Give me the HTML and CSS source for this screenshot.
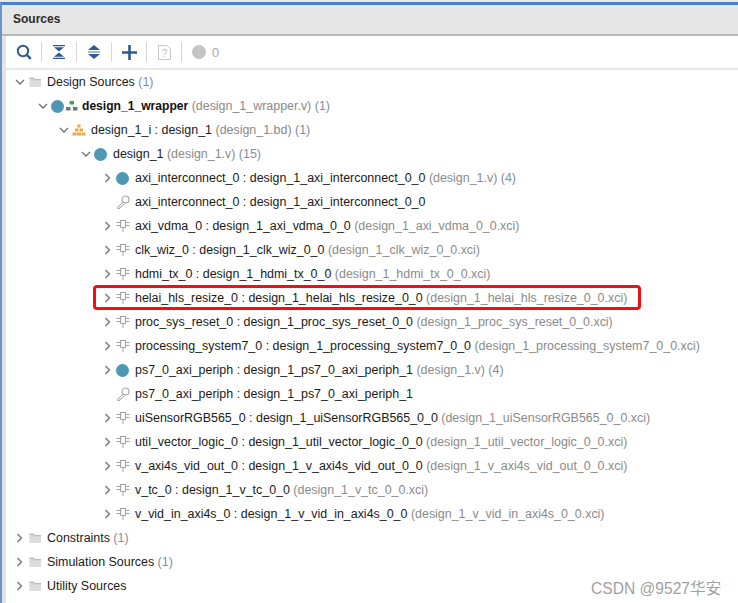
FILE: index.html
```html
<!DOCTYPE html>
<html lang="en">
<head>
  <meta charset="UTF-8" />
  <title>Sources</title>
  <link rel="stylesheet" href="styles.css">
</head>
<body>
  <svg class="defs" width="0" height="0">
    <symbol id="i-down" viewBox="0 0 10 10"><path d="M1 3l4 4 4-4" fill="none" stroke="#707070" stroke-width="1.3"/></symbol>
    <symbol id="i-right" viewBox="0 0 10 10"><path d="M2.500 1l4 4-4 4" fill="none" stroke="#707070" stroke-width="1.3"/></symbol>
    <symbol id="i-folder" viewBox="0 0 14 12"><path d="M1.500 3h4l1 1.500h6.500V11H1.500z" fill="#dcdcdc"/><path d="M1.500 1.500h4.500l1 1.500h6v1.500H6.500L5.500 3h-4z" fill="#bcbcbc"/></symbol>
    <symbol id="i-chip" viewBox="0 0 14 14"><path d="M4 1.500h6M4.500 1.500v7h5v-7M7 8.500V13M.5 3.500h4M.5 6.500h4M9.500 3.500h4M9.500 6.500h4" fill="none" stroke="#a0a0a0"/></symbol>
    <symbol id="i-key" viewBox="0 0 14 14"><circle cx="9.500" cy="4.500" r="3.500" fill="none" stroke="#a2a2a2" stroke-width="1.100"/><path d="M7 7L1.500 12.500v1h2L4 12h1.500l.5-1.500 1.500-.5L8 8.500" fill="none" stroke="#a2a2a2"/></symbol>
    <symbol id="i-tree" viewBox="0 0 12 10"><rect x="3.500" y="0" width="4.500" height="3.500" fill="#2fb14c"/><rect x="0" y="6" width="4.500" height="3.500" fill="#6b7780"/><rect x="7" y="6" width="4.500" height="3.500" fill="#6b7780"/></symbol>
    <symbol id="i-bd" viewBox="0 0 14 12"><rect x="5.500" y="0.500" width="3" height="3" fill="#f2a93b"/><rect x="3" y="4.500" width="3.500" height="3" fill="#f2a93b"/><rect x="7.500" y="4.500" width="3.500" height="3" fill="#f2a93b"/><rect x="0.500" y="8.500" width="4" height="3" fill="#f2a93b"/><rect x="5" y="8.500" width="4" height="3" fill="#f2a93b"/><rect x="9.500" y="8.500" width="4" height="3" fill="#f2a93b"/></symbol>
  </svg>

  <div class="window">
    <div class="title">Sources</div>

    <div class="pane">
      <div class="toolbar">
        <span class="tool">
          <svg width="16" height="16" viewBox="0 0 16 16"><circle cx="7" cy="7" r="5.200" fill="none" stroke="#2f5a8f" stroke-width="2"/><path d="M10.800 10.800L14.800 14.800" stroke="#2f5a8f" stroke-width="2.400"/></svg>
        </span>
        <span class="sep"></span>
        <span class="tool">
          <svg width="12" height="14" viewBox="0 0 12 14"><path d="M0 0h12v1.300H0zM0 12.700h12V14H0zM1 2.200h10L6 6.400zM1 11.800h10L6 7.600z" fill="#2f5a8f"/></svg>
        </span>
        <span class="sep"></span>
        <span class="tool">
          <svg width="12" height="14" viewBox="0 0 12 14"><path d="M0 5L6 0l6 5zM0 9l6 5 6-5z" fill="#2f5a8f"/><path d="M0 6.200h12v1.600H0z" fill="#8fa6c4"/></svg>
        </span>
        <span class="sep"></span>
        <span class="tool">
          <svg width="15" height="15" viewBox="0 0 15 15"><path d="M6.200 0h2.600v6.200H15v2.600H8.800V15H6.200V8.800H0V6.200h6.200z" fill="#2f5a8f"/></svg>
        </span>
        <span class="sep"></span>
        <span class="tool">
          <svg width="13" height="15" viewBox="0 0 13 15"><path d="M.5.500h8.500l3.500 3.500v10.500H.5z" fill="none" stroke="#c8c8c8"/><text x="6.500" y="11.500" class="help">?</text></svg>
        </span>
        <span class="sep"></span>
        <span class="status"><span class="status-dot">!</span>0</span>
      </div>

      <ul class="tree">
        <li class="row d0"><svg class="arrow"><use href="#i-down"/></svg><svg class="icon"><use href="#i-folder"/></svg><span>Design Sources</span><span class="count">&nbsp;(1)</span></li>
        <li class="row d1"><svg class="arrow"><use href="#i-down"/></svg><span class="dot tight"></span><svg class="icon-tree"><use href="#i-tree"/></svg><span class="bold">design_1_wrapper</span><span class="meta">&nbsp;(design_1_wrapper.v)</span><span class="count">&nbsp;(1)</span></li>
        <li class="row d2"><svg class="arrow"><use href="#i-down"/></svg><svg class="icon"><use href="#i-bd"/></svg><span>design_1_i : design_1</span><span class="meta">&nbsp;(design_1.bd)</span><span class="count">&nbsp;(1)</span></li>
        <li class="row d3"><svg class="arrow"><use href="#i-down"/></svg><span class="dot"></span><span>design_1</span><span class="meta">&nbsp;(design_1.v)</span><span class="count">&nbsp;(15)</span></li>
        <li class="row d4"><svg class="arrow"><use href="#i-right"/></svg><span class="dot"></span><span>axi_interconnect_0 : design_1_axi_interconnect_0_0</span><span class="meta">&nbsp;(design_1.v)</span><span class="count">&nbsp;(4)</span></li>
        <li class="row d4"><span class="no-arrow"></span><svg class="icon"><use href="#i-key"/></svg><span>axi_interconnect_0 : design_1_axi_interconnect_0_0</span></li>
        <li class="row d4"><svg class="arrow"><use href="#i-right"/></svg><svg class="icon"><use href="#i-chip"/></svg><span>axi_vdma_0 : design_1_axi_vdma_0_0</span><span class="meta">&nbsp;(design_1_axi_vdma_0_0.xci)</span></li>
        <li class="row d4"><svg class="arrow"><use href="#i-right"/></svg><svg class="icon"><use href="#i-chip"/></svg><span>clk_wiz_0 : design_1_clk_wiz_0_0</span><span class="meta">&nbsp;(design_1_clk_wiz_0_0.xci)</span></li>
        <li class="row d4"><svg class="arrow"><use href="#i-right"/></svg><svg class="icon"><use href="#i-chip"/></svg><span>hdmi_tx_0 : design_1_hdmi_tx_0_0</span><span class="meta">&nbsp;(design_1_hdmi_tx_0_0.xci)</span></li>
        <li class="row d4 marked"><svg class="arrow"><use href="#i-right"/></svg><svg class="icon"><use href="#i-chip"/></svg><span>helai_hls_resize_0 : design_1_helai_hls_resize_0_0</span><span class="meta">&nbsp;(design_1_helai_hls_resize_0_0.xci)</span></li>
        <li class="row d4"><svg class="arrow"><use href="#i-right"/></svg><svg class="icon"><use href="#i-chip"/></svg><span>proc_sys_reset_0 : design_1_proc_sys_reset_0_0</span><span class="meta">&nbsp;(design_1_proc_sys_reset_0_0.xci)</span></li>
        <li class="row d4"><svg class="arrow"><use href="#i-right"/></svg><svg class="icon"><use href="#i-chip"/></svg><span>processing_system7_0 : design_1_processing_system7_0_0</span><span class="meta">&nbsp;(design_1_processing_system7_0_0.xci)</span></li>
        <li class="row d4"><svg class="arrow"><use href="#i-right"/></svg><span class="dot"></span><span>ps7_0_axi_periph : design_1_ps7_0_axi_periph_1</span><span class="meta">&nbsp;(design_1.v)</span><span class="count">&nbsp;(4)</span></li>
        <li class="row d4"><span class="no-arrow"></span><svg class="icon"><use href="#i-key"/></svg><span>ps7_0_axi_periph : design_1_ps7_0_axi_periph_1</span></li>
        <li class="row d4"><svg class="arrow"><use href="#i-right"/></svg><svg class="icon"><use href="#i-chip"/></svg><span>uiSensorRGB565_0 : design_1_uiSensorRGB565_0_0</span><span class="meta">&nbsp;(design_1_uiSensorRGB565_0_0.xci)</span></li>
        <li class="row d4"><svg class="arrow"><use href="#i-right"/></svg><svg class="icon"><use href="#i-chip"/></svg><span>util_vector_logic_0 : design_1_util_vector_logic_0_0</span><span class="meta">&nbsp;(design_1_util_vector_logic_0_0.xci)</span></li>
        <li class="row d4"><svg class="arrow"><use href="#i-right"/></svg><svg class="icon"><use href="#i-chip"/></svg><span>v_axi4s_vid_out_0 : design_1_v_axi4s_vid_out_0_0</span><span class="meta">&nbsp;(design_1_v_axi4s_vid_out_0_0.xci)</span></li>
        <li class="row d4"><svg class="arrow"><use href="#i-right"/></svg><svg class="icon"><use href="#i-chip"/></svg><span>v_tc_0 : design_1_v_tc_0_0</span><span class="meta">&nbsp;(design_1_v_tc_0_0.xci)</span></li>
        <li class="row d4"><svg class="arrow"><use href="#i-right"/></svg><svg class="icon"><use href="#i-chip"/></svg><span>v_vid_in_axi4s_0 : design_1_v_vid_in_axi4s_0_0</span><span class="meta">&nbsp;(design_1_v_vid_in_axi4s_0_0.xci)</span></li>
        <li class="row d0"><svg class="arrow"><use href="#i-right"/></svg><svg class="icon"><use href="#i-folder"/></svg><span>Constraints</span><span class="count">&nbsp;(1)</span></li>
        <li class="row d0"><svg class="arrow"><use href="#i-right"/></svg><svg class="icon"><use href="#i-folder"/></svg><span>Simulation Sources</span><span class="count">&nbsp;(1)</span></li>
        <li class="row d0"><svg class="arrow"><use href="#i-right"/></svg><svg class="icon"><use href="#i-folder"/></svg><span>Utility Sources</span></li>
      </ul>
    </div>
  </div>

  <div class="mark">CSDN @9527华安</div>
</body>
</html>
```
FILE: styles.css
```css
html, body {
  margin: 0;
  height: 100%;
}
body {
  font-family: "Liberation Sans", Arial, sans-serif;
  font-size: 12.45px;
  background-color: #ffffff;
  color: #1a1a1a;
  overflow: hidden;
  position: relative;
}
.defs {
  position: absolute;
}

.window {
  box-sizing: border-box;
  height: 603px;
  border-top: 3px solid #4a7fd0;
  border-left: 2px solid #6d93cf;
  box-shadow: 0 -2px 0 #e8e8e8;
  margin-top: 2px;
  display: flex;
  flex-direction: column;
}
.title {
  height: 31px;
  flex: none;
  box-sizing: border-box;
  padding: 7px 0 0 11px;
  font-size: 12px;
  font-weight: bold;
  color: #2b2b2b;
  background-color: #e6e6e6;
  border-bottom: 2px solid #b8b8b8;
}
.pane {
  flex: 1;
  border-left: 4px solid #e4e4e4;
}
.toolbar {
  height: 34px;
  box-sizing: border-box;
  display: flex;
  align-items: center;
  border-bottom: 2px solid #e8e8e8;
  padding-left: 1px;
}
.tool {
  width: 34px;
  height: 20px;
  display: flex;
  align-items: center;
  justify-content: center;
}
.sep {
  width: 1px;
  height: 20px;
  background-color: #d6d6d6;
}
.help {
  font-size: 10px;
  fill: #bdbdbd;
  text-anchor: middle;
}
.status {
  display: flex;
  align-items: center;
  gap: 6px;
  margin-left: 10px;
  font-size: 13px;
  color: #a8a8a8;
}
.status-dot {
  width: 14px;
  height: 14px;
  border-radius: 50%;
  background-color: #c4c4c4;
  color: #cdcdcd;
  font-size: 10px;
  font-weight: bold;
  text-align: center;
  line-height: 14px;
}

.tree {
  list-style: none;
  margin: 0;
  padding: 0;
}
.row {
  height: 24px;
  display: flex;
  align-items: center;
  white-space: nowrap;
  position: relative;
}
.d0 { padding-left: 9px; }
.d1 { padding-left: 32px; }
.d2 { padding-left: 53px; }
.d3 { padding-left: 75px; }
.d4 { padding-left: 97px; }
.row svg {
  flex: none;
}
.arrow {
  width: 10px;
  height: 10px;
  margin-right: 3px;
}
.no-arrow {
  width: 13px;
  flex: none;
}
.icon {
  width: 14px;
  height: 14px;
  margin-right: 5px;
}
.dot {
  width: 13px;
  height: 13px;
  flex: none;
  border-radius: 50%;
  background-color: #4e98b6;
  margin-right: 6px;
}
.dot.tight {
  margin-right: 2px;
}
.icon-tree {
  width: 12px;
  height: 10px;
  margin-right: 4px;
}
.bold {
  font-size: 12.1px;
  font-weight: bold;
  color: #111111;
}
.meta {
  color: #8a8a8a;
}
.count {
  color: #7f8ea3;
}
.marked::after {
  content: "";
  position: absolute;
  left: 87px;
  top: -1px;
  width: 548px;
  height: 25px;
  box-sizing: border-box;
  border: 3px solid #f01010;
  border-radius: 4px;
}
.mark {
  position: absolute;
  left: 591px;
  top: 576px;
  font-size: 15.6px;
  color: #a0a0a0;
  font-family: "Liberation Sans", "Noto Sans CJK SC", sans-serif;
}
```
